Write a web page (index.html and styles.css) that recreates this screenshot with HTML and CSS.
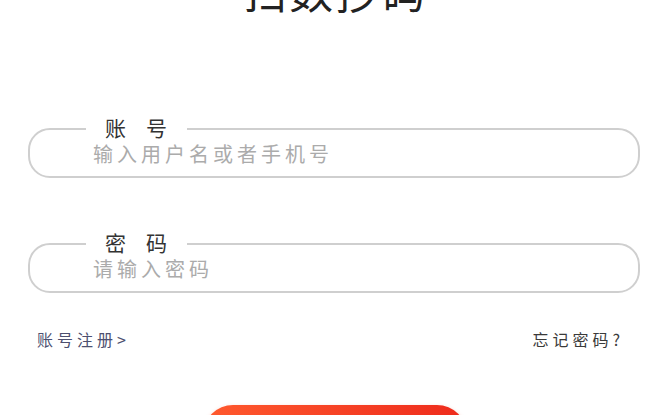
FILE: index.html
```html
<!DOCTYPE html>
<html lang="zh-CN">
<head>
    <meta charset="UTF-8">
    <meta name="viewport" content="width=device-width, initial-scale=1.0">
    <title>扫数抄码</title>
    <link rel="stylesheet" href="styles.css">
</head>
<body>
    <h1 class="title">扫数抄码</h1>

    <div class="field field-user">
        <label for="user">账号</label>
        <input type="text" id="user" placeholder="输入用户名或者手机号">
    </div>

    <div class="field field-pass">
        <label for="pass">密码</label>
        <input type="password" id="pass" placeholder="请输入密码">
    </div>

    <div class="links">
        <a href="#" class="register">账号注册&gt;</a>
        <a href="#" class="forgot">忘记密码?</a>
    </div>

    <button class="login">登 录</button>
</body>
</html>
```

FILE: styles.css
```css
body {
    margin: 0;
    background: #fff;
    font-family: "Noto Sans CJK SC", "Noto Sans", sans-serif;
    overflow: hidden;
}
.title {
    margin: -32px 0 0;
    text-align: center;
    font-size: 44px;
    line-height: 44px;
    font-weight: 400;
    color: #222;
    letter-spacing: 2px;
}
.field {
    position: relative;
    margin: 0 30px 0 28px;
    padding: 0 0 0 63px;
    height: 50px;
    box-sizing: border-box;
    border: 2px solid #cfcfcf;
    border-radius: 22px;
    display: flex;
    align-items: center;
}
.field-user {
    margin-top: 116px;
}
.field-pass {
    margin-top: 65px;
}
.field label {
    position: absolute;
    top: -17px;
    left: 56px;
    padding: 0 0 0 19px;
    background: #fff;
    font-size: 21px;
    line-height: 28px;
    letter-spacing: 20px;
    color: #333;
}
.field input {
    border: none;
    outline: none;
    width: 100%;
    padding: 0;
    font-family: inherit;
    font-size: 20px;
    letter-spacing: 4px;
    color: #333;
    background: transparent;
}
.field input::placeholder {
    color: #ababab;
}
.links {
    display: flex;
    justify-content: space-between;
    margin: 35px 46px 0 37px;
    font-size: 16px;
    line-height: 22px;
    letter-spacing: 4px;
}
.links a {
    text-decoration: none;
}
.register {
    color: #4d5070;
}
.forgot {
    color: #3a3a3a;
}
.login {
    display: block;
    margin: 55px auto 0;
    width: 264px;
    height: 60px;
    border: none;
    border-radius: 30px;
    background: linear-gradient(90deg, #ff5a2e, #ee2b1c);
    color: #fff;
    font-size: 22px;
    box-shadow: 0 2px 4px rgba(230, 60, 30, 0.35);
}
```
